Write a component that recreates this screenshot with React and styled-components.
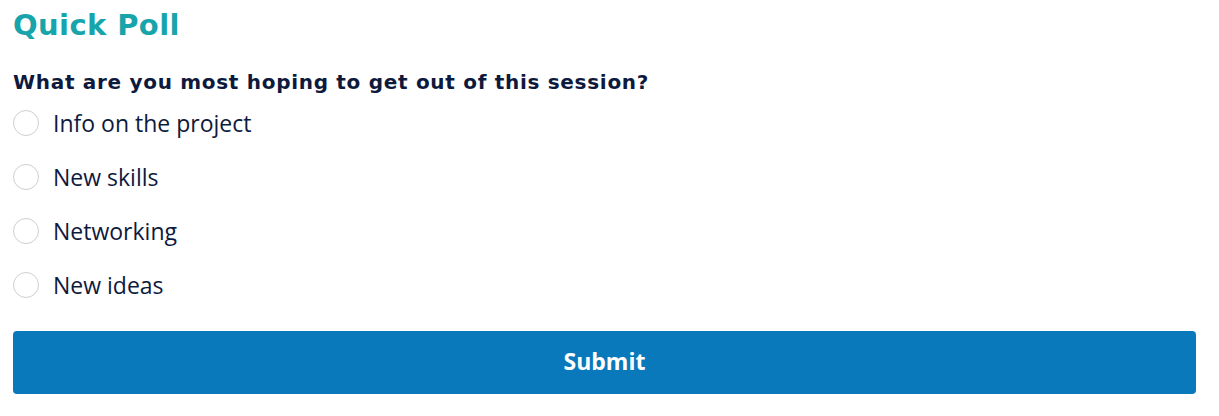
import React from "react"
import styled, { createGlobalStyle } from "styled-components"

const GlobalStyle = createGlobalStyle`
    html, body {
        margin: 0;
        padding: 0;
        background: #ffffff;
    }
`

const Page = styled.div`
    padding: 0 23px 0 13px;
    font-family: "Open Sans", sans-serif;
    color: #0e1a3d;
`

const Title = styled.h2`
    margin: 0;
    padding-top: 5px;
    font-family: "DejaVu Sans", sans-serif;
    font-weight: 700;
    font-size: 29px;
    line-height: 40px;
    letter-spacing: 0.4px;
    color: #17a4aa;
`

const Question = styled.h3`
    margin: 23px 0 0;
    font-family: "DejaVu Sans", sans-serif;
    font-weight: 700;
    font-size: 20px;
    line-height: 28px;
    letter-spacing: 0.7px;
    color: #0e1a3d;
`

const Options = styled.div`
    display: flex;
    flex-direction: column;
    gap: 24px;
    margin-top: 12px;
`

const Option = styled.label`
    display: flex;
    align-items: center;
    gap: 14px;
    height: 30px;
    font-size: 23px;
    cursor: pointer;
`

const Radio = styled.span`
    width: 26px;
    height: 26px;
    border: 1px solid #cfcfcf;
    border-radius: 50%;
    box-sizing: border-box;
    background: #fff;
`

const Submit = styled.button`
    display: block;
    width: 100%;
    height: 63px;
    margin-top: 31px;
    padding: 0 0 3px;
    border: none;
    border-radius: 4px;
    background: #0a79bb;
    color: #fff;
    font-family: "Open Sans", sans-serif;
    font-weight: 700;
    font-size: 23px;
    cursor: pointer;
`

const choices = ["Info on the project", "New skills", "Networking", "New ideas"]

function App() {
    return (
        <>
            <GlobalStyle />
            <Page>
                <Title>Quick Poll</Title>
                <Question>What are you most hoping to get out of this session?</Question>
                <Options>
                    {choices.map(c => (
                        <Option key={c}>
                            <Radio />
                            {c}
                        </Option>
                    ))}
                </Options>
                <Submit>Submit</Submit>
            </Page>
        </>
    )
}

export default App
